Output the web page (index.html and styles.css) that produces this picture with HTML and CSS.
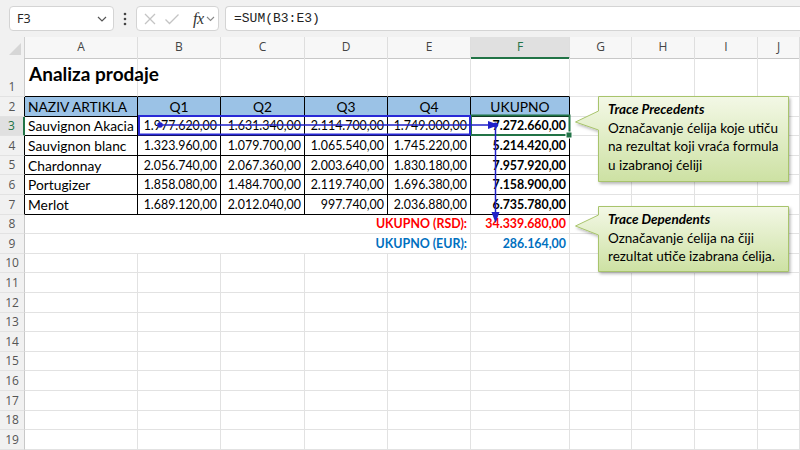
FILE: index.html
```html
<!DOCTYPE html>
<html>
<head>
<meta charset="utf-8">
<title>Analiza prodaje</title>
<link rel="stylesheet" href="styles.css">
</head>
<body>
<div class="app">
  <div class="toolbar">
    <div class="namebox">
      <span class="nb-text">F3</span>
      <svg class="chev" width="10" height="6" viewBox="0 0 10 6"><path d="M1 1 L5 5 L9 1" fill="none" stroke="#555" stroke-width="1.2"/></svg>
    </div>
    <svg class="dots" width="4" height="14" viewBox="0 0 4 14"><circle cx="2" cy="2" r="1.3" fill="#444"/><circle cx="2" cy="7" r="1.3" fill="#444"/><circle cx="2" cy="12" r="1.3" fill="#444"/></svg>
    <div class="fxbox">
      <svg width="14" height="14" viewBox="0 0 14 14"><path d="M2 2 L12 12 M12 2 L2 12" stroke="#c4c4c4" stroke-width="1.3" fill="none"/></svg>
      <svg width="16" height="14" viewBox="0 0 16 14"><path d="M1.5 7.5 L5.5 11.5 L14.5 2.5" stroke="#c4c4c4" stroke-width="1.3" fill="none"/></svg>
      <span class="fx">fx</span>
      <svg width="9" height="6" viewBox="0 0 9 6"><path d="M1 1 L4.5 4.5 L8 1" fill="none" stroke="#888" stroke-width="1.1"/></svg>
    </div>
    <div class="formula">=SUM(B3:E3)</div>
  </div>

  <div class="sheet">
    <div class="row hdr">
      <div class="corner"><svg width="12" height="12" viewBox="0 0 12 12"><path d="M12 0 L12 12 L0 12 Z" fill="#d6d6d6"/></svg></div>
      <div class="ch">A</div><div class="ch">B</div><div class="ch">C</div><div class="ch">D</div><div class="ch">E</div><div class="ch sel">F</div><div class="ch">G</div><div class="ch">H</div><div class="ch">I</div><div class="ch">J</div>
    </div>

    <div class="row r1">
      <div class="rh">1</div>
      <div class="c tb title">Analiza prodaje</div><div class="c tb"></div><div class="c tb"></div><div class="c tb"></div><div class="c tb"></div><div class="c tb"></div><div class="c"></div><div class="c"></div><div class="c"></div><div class="c"></div>
    </div>

    <div class="row">
      <div class="rh tl">2</div>
      <div class="c t th left">NAZIV ARTIKLA</div><div class="c t th">Q1</div><div class="c t th">Q2</div><div class="c t th">Q3</div><div class="c t th">Q4</div><div class="c t th">UKUPNO</div><div class="c"></div><div class="c"></div><div class="c"></div><div class="c"></div>
    </div>

    <div class="row">
      <div class="rh tl rsel">3</div>
      <div class="c t name">Sauvignon Akacia</div><div class="c t num">1.977.620,00</div><div class="c t num">1.631.340,00</div><div class="c t num">2.114.700,00</div><div class="c t num">1.749.000,00</div><div class="c t num b">7.272.660,00</div><div class="c"></div><div class="c"></div><div class="c"></div><div class="c"></div>
    </div>

    <div class="row">
      <div class="rh tl">4</div>
      <div class="c t name">Sauvignon blanc</div><div class="c t num">1.323.960,00</div><div class="c t num">1.079.700,00</div><div class="c t num">1.065.540,00</div><div class="c t num">1.745.220,00</div><div class="c t num b">5.214.420,00</div><div class="c"></div><div class="c"></div><div class="c"></div><div class="c"></div>
    </div>

    <div class="row">
      <div class="rh tl">5</div>
      <div class="c t name">Chardonnay</div><div class="c t num">2.056.740,00</div><div class="c t num">2.067.360,00</div><div class="c t num">2.003.640,00</div><div class="c t num">1.830.180,00</div><div class="c t num b">7.957.920,00</div><div class="c"></div><div class="c"></div><div class="c"></div><div class="c"></div>
    </div>

    <div class="row">
      <div class="rh tl">6</div>
      <div class="c t name">Portugizer</div><div class="c t num">1.858.080,00</div><div class="c t num">1.484.700,00</div><div class="c t num">2.119.740,00</div><div class="c t num">1.696.380,00</div><div class="c t num b">7.158.900,00</div><div class="c"></div><div class="c"></div><div class="c"></div><div class="c"></div>
    </div>

    <div class="row">
      <div class="rh tl">7</div>
      <div class="c t name">Merlot</div><div class="c t num">1.689.120,00</div><div class="c t num">2.012.040,00</div><div class="c t num">997.740,00</div><div class="c t num">2.036.880,00</div><div class="c t num b">6.735.780,00</div><div class="c"></div><div class="c"></div><div class="c"></div><div class="c"></div>
    </div>

    <div class="row">
      <div class="rh">8</div>
      <div class="c span5 num b red">UKUPNO (RSD):</div><div class="c num b red">34.339.680,00</div><div class="c"></div><div class="c"></div><div class="c"></div><div class="c"></div>
    </div>

    <div class="row">
      <div class="rh">9</div>
      <div class="c span5 num b blue">UKUPNO (EUR):</div><div class="c num b blue">286.164,00</div><div class="c"></div><div class="c"></div><div class="c"></div><div class="c"></div>
    </div>

    <div class="row"><div class="rh">10</div><div class="c"></div><div class="c"></div><div class="c"></div><div class="c"></div><div class="c"></div><div class="c"></div><div class="c"></div><div class="c"></div><div class="c"></div><div class="c"></div></div>
    <div class="row"><div class="rh">11</div><div class="c"></div><div class="c"></div><div class="c"></div><div class="c"></div><div class="c"></div><div class="c"></div><div class="c"></div><div class="c"></div><div class="c"></div><div class="c"></div></div>
    <div class="row"><div class="rh">12</div><div class="c"></div><div class="c"></div><div class="c"></div><div class="c"></div><div class="c"></div><div class="c"></div><div class="c"></div><div class="c"></div><div class="c"></div><div class="c"></div></div>
    <div class="row"><div class="rh">13</div><div class="c"></div><div class="c"></div><div class="c"></div><div class="c"></div><div class="c"></div><div class="c"></div><div class="c"></div><div class="c"></div><div class="c"></div><div class="c"></div></div>
    <div class="row"><div class="rh">14</div><div class="c"></div><div class="c"></div><div class="c"></div><div class="c"></div><div class="c"></div><div class="c"></div><div class="c"></div><div class="c"></div><div class="c"></div><div class="c"></div></div>
    <div class="row"><div class="rh">15</div><div class="c"></div><div class="c"></div><div class="c"></div><div class="c"></div><div class="c"></div><div class="c"></div><div class="c"></div><div class="c"></div><div class="c"></div><div class="c"></div></div>
    <div class="row"><div class="rh">16</div><div class="c"></div><div class="c"></div><div class="c"></div><div class="c"></div><div class="c"></div><div class="c"></div><div class="c"></div><div class="c"></div><div class="c"></div><div class="c"></div></div>
    <div class="row"><div class="rh">17</div><div class="c"></div><div class="c"></div><div class="c"></div><div class="c"></div><div class="c"></div><div class="c"></div><div class="c"></div><div class="c"></div><div class="c"></div><div class="c"></div></div>
    <div class="row"><div class="rh">18</div><div class="c"></div><div class="c"></div><div class="c"></div><div class="c"></div><div class="c"></div><div class="c"></div><div class="c"></div><div class="c"></div><div class="c"></div><div class="c"></div></div>
    <div class="row"><div class="rh">19</div><div class="c"></div><div class="c"></div><div class="c"></div><div class="c"></div><div class="c"></div><div class="c"></div><div class="c"></div><div class="c"></div><div class="c"></div><div class="c"></div></div>
  </div>

  <svg class="overlay" width="800" height="450" viewBox="0 0 800 450">
    <defs>
      <linearGradient id="cg" x1="0" y1="0" x2="0" y2="1">
        <stop offset="0" stop-color="#f3f8e6"/>
        <stop offset="1" stop-color="#cde1a3"/>
      </linearGradient>
      <filter id="sh" x="-10%" y="-10%" width="130%" height="140%">
        <feDropShadow dx="1.5" dy="2" stdDeviation="1.8" flood-color="#000" flood-opacity="0.28"/>
      </filter>
    </defs>
    <rect x="471" y="115.5" width="98.5" height="19.5" fill="none" stroke="#217346" stroke-width="2"/>
    <rect x="566" y="132" width="6" height="6" fill="#217346" stroke="#fff" stroke-width="1"/>
    <rect x="139" y="116" width="331" height="18.5" fill="none" stroke="#2929d6" stroke-width="2"/>
    <circle cx="160" cy="125" r="2.8" fill="#2020c8"/>
    <line x1="160" y1="125" x2="490" y2="125" stroke="#2020c8" stroke-width="1.5"/>
    <polygon points="488,121 499,125 488,129" fill="#2020c8"/>
    <circle cx="495.5" cy="125" r="2.5" fill="#2020c8"/>
    <line x1="495.5" y1="125" x2="495.5" y2="214" stroke="#2020c8" stroke-width="1.5"/>
    <polygon points="491.5,212 495.5,223 499.5,212" fill="#2020c8"/>
    <path d="M598.5 96.5 H788.5 V181.5 H598.5 V130 L575.5 122 L598.5 111 Z" fill="url(#cg)" stroke="#a8c46c" stroke-width="1" filter="url(#sh)"/>
    <path d="M598.5 206.5 H788.5 V271.5 H598.5 V235 L575.5 226 L598.5 215 Z" fill="url(#cg)" stroke="#a8c46c" stroke-width="1" filter="url(#sh)"/>
  </svg>

  <div class="callout c1">
    <div class="ct">Trace Precedents</div>
    <div>Označavanje ćelija koje utiču</div>
    <div>na rezultat koji vraća formula</div>
    <div>u izabranoj ćeliji</div>
  </div>
  <div class="callout c2">
    <div class="ct">Trace Dependents</div>
    <div>Označavanje ćelija na čiji</div>
    <div>rezultat utiče izabrana ćelija.</div>
  </div>
</div>
</body>
</html>
```

FILE: styles.css
```css
* { box-sizing: border-box; }
html, body { margin: 0; padding: 0; }
body { width: 800px; height: 450px; overflow: hidden; background: #fff; font-family: "Lato", "Liberation Sans", sans-serif; }

.app { position: relative; width: 800px; height: 450px; overflow: hidden; }

/* ---------- formula bar ---------- */
.toolbar {
  height: 37px;
  background: #f1f1f1;
  display: flex;
  align-items: center;
  padding: 0 0 0 9px;
}
.namebox {
  width: 105px; height: 25px;
  background: #fff;
  border: 1px solid #d4d4d4;
  border-radius: 4px;
  display: flex; align-items: center; justify-content: space-between;
  padding: 0 6px 0 7px;
  font-family: "Open Sans", "Noto Sans", sans-serif;
  font-size: 12.5px; color: #222;
}
.dots { margin: 0 9px 0 9px; }
.fxbox {
  width: 83px; height: 25px;
  background: #fff;
  border: 1px solid #d4d4d4;
  border-radius: 4px;
  display: flex; align-items: center;
  padding: 0 0 0 6px;
  gap: 7px;
}
.fx { font-family: "Liberation Serif", "DejaVu Serif", serif; font-style: italic; font-size: 16px; color: #333; margin-left: 6px; margin-right: -5px; letter-spacing: -0.5px; }
.formula {
  flex: 1;
  margin-left: 6px;
  height: 25px;
  background: #fff;
  border: 1px solid #d4d4d4;
  border-right: none;
  border-radius: 4px 0 0 4px;
  display: flex; align-items: center;
  padding-left: 8px;
  font-family: "Liberation Mono", "DejaVu Sans Mono", monospace;
  font-size: 13px; color: #222;
}

/* ---------- sheet grid ---------- */
.sheet { display: flex; flex-direction: column; }
.row {
  display: grid;
  grid-template-columns: 25px 113px 83px 84px 83px 83px 99px 62px 63px 63px 42px;
  height: 19.6px;
}
.row.hdr { height: 21px; background: #f7f7f7; }
.row.r1 { height: 39px; }

.corner {
  background: #f1f1f1;
  border-right: 1px solid #d0d0d0;
  border-bottom: 1px solid #c8c8c8;
  display: flex; align-items: flex-end; justify-content: flex-end;
  padding: 0 3px 3px 0;
}
.ch {
  border-right: 1px solid #dedede;
  border-bottom: 1px solid #c8c8c8;
  text-align: center;
  font-family: "Open Sans", "Noto Sans", sans-serif;
  font-size: 12px; line-height: 20px; color: #444;
}
.ch.sel { background: #e0e0e0; color: #217346; border-bottom: 2px solid #217346; }

.rh {
  background: #f1f1f1;
  border-right: 1px solid #c8c8c8;
  border-bottom: 1px solid #e2e2e2;
  font-family: "Open Sans", "Noto Sans", sans-serif;
  font-size: 12px; color: #555;
  display: flex; align-items: flex-end; justify-content: center;
  padding-bottom: 1px;
  line-height: 17px;
}
.rh.tl { border-right-color: #000; }
.rh.rsel { background: #e0e0e0; color: #217346; border-right: 2px solid #217346; }

.c {
  border-right: 1px solid #e2e2e2;
  border-bottom: 1px solid #e2e2e2;
  white-space: nowrap;
  font-size: 13.8px; color: #000;
  display: flex; align-items: center;
  padding: 0 3px;
  min-width: 0;
}
.c.tb { border-bottom-color: #000; }
.c.t { border-right-color: #000; border-bottom-color: #000; }
.title {
  overflow: visible;
  font-size: 19px; font-weight: 700;
  align-items: flex-start;
  padding-top: 4px; padding-left: 4px;
}
.th { background: #9bc2e6; justify-content: center; }
.th.left { justify-content: flex-start; }
.name { justify-content: flex-start; }
.num { justify-content: flex-end; font-size: 12.4px; }
.b { font-weight: 700; }
.red { color: #ff0000; }
.blue { color: #0070c0; }
.span5 { grid-column: span 5; }

/* ---------- overlays ---------- */
.overlay { position: absolute; left: 0; top: 0; pointer-events: none; }

.callout {
  position: absolute;
  left: 608px;
  font-size: 13.5px;
  line-height: 18.5px;
  color: #000;
  white-space: nowrap;
}
.callout .ct { font-weight: 700; font-style: italic; }
.c1 { top: 100px; }
.c2 { top: 210px; }
```
